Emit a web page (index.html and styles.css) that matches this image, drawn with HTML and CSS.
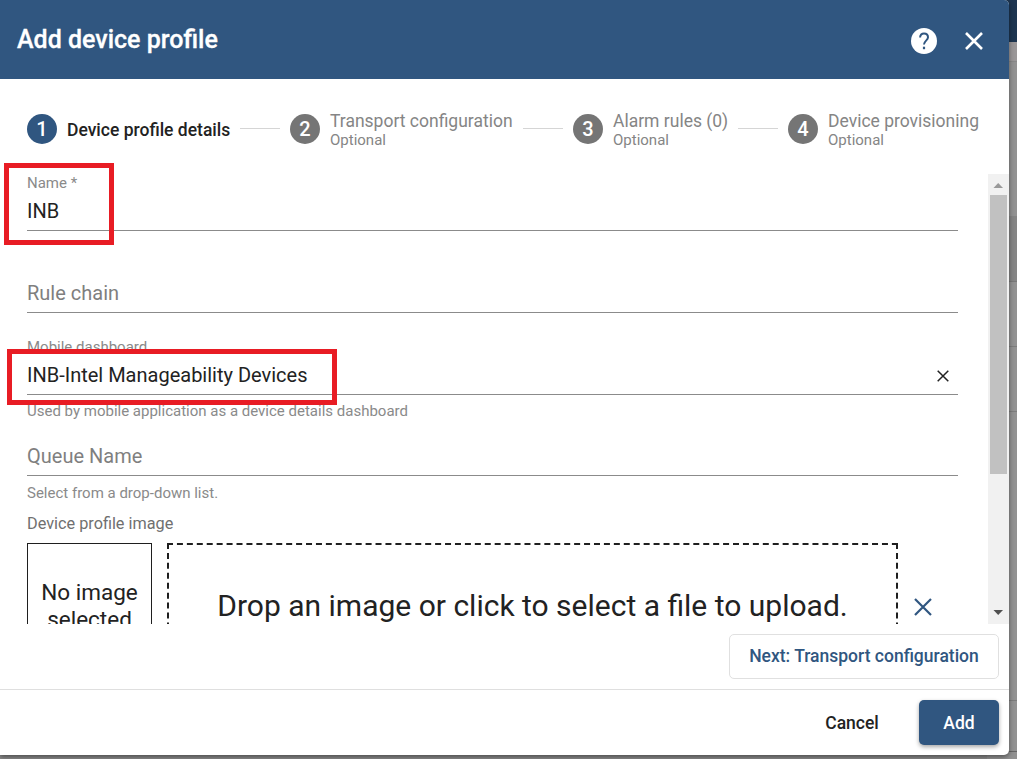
FILE: index.html
```html
<!DOCTYPE html>
<html lang="en">
<head>
<meta charset="utf-8">
<title>Add device profile</title>
<link rel="stylesheet" href="styles.css">
</head>
<body>
<div class="backdrop">
  <div class="page-edge">
    <div class="edge-top"></div>
    <div class="edge-bar"></div>
    <div class="edge-light"></div>
    <div class="edge-head"></div>
    <div class="edge-row"></div>
    <div class="edge-row"></div>
    <div class="edge-rest"></div>
    <div class="edge-foot"></div>
  </div>
  <main class="dialog">
    <header class="toolbar">
      <h1 class="title">Add device profile</h1>
      <svg class="help" viewBox="0 0 26 26"><circle cx="13" cy="13" r="13" fill="#fff"/><path d="M9.1 9.6C9.1 6.9 10.7 5.400 13 5.400s4 1.500 4 3.900c0 3.200-4 3.500-4 7.200" fill="none" stroke="#305680" stroke-width="2"/><rect x="11.900" y="18.700" width="2.200" height="2.500" fill="#305680"/></svg>
      <svg class="close" viewBox="0 0 18 18"><path d="M1 1l16 16M17 1L1 17" stroke="#fff" stroke-width="2.6"/></svg>
    </header>
    <nav class="stepper">
      <div class="circle active">1</div>
      <div class="label l1 current">Device profile details</div>
      <div class="line"></div>
      <div class="circle">2</div>
      <div class="label l2"><span class="step-name">Transport configuration</span><span class="optional">Optional</span></div>
      <div class="line"></div>
      <div class="circle">3</div>
      <div class="label l3"><span class="step-name">Alarm rules (0)</span><span class="optional">Optional</span></div>
      <div class="line"></div>
      <div class="circle">4</div>
      <div class="label l4"><span class="step-name">Device provisioning</span><span class="optional">Optional</span></div>
    </nav>
    <section class="scroll-area">
      <div class="form">
        <div class="field name-field">
          <div class="caption">Name *</div>
          <div class="value">INB</div>
        </div>
        <div class="field rule-field">
          <div class="value placeholder">Rule chain</div>
        </div>
        <div class="field dash-field">
          <div class="caption">Mobile dashboard</div>
          <div class="value row"><span class="dash-text">INB-Intel Manageability Devices</span>
            <svg class="clear" viewBox="0 0 12 12"><path d="M.7.7l10.6 10.6M11.3.7L.7 11.3" stroke="#222" stroke-width="1.5"/></svg></div>
        </div>
        <div class="hint hint-dash">Used by mobile application as a device details dashboard</div>
        <div class="field queue-field">
          <div class="value placeholder">Queue Name</div>
        </div>
        <div class="hint hint-queue">Select from a drop-down list.</div>
        <div class="image-label">Device profile image</div>
        <div class="upload">
          <div class="preview">No image<br>selected</div>
          <div class="drop"><svg class="dash-border" viewBox="0 0 731 110"><path d="M0 1H731" fill="none" stroke="#1f1f1f" stroke-width="2" stroke-dasharray="6 3.930"/><path d="M1 0V110M730 0V110" fill="none" stroke="#1f1f1f" stroke-width="2" stroke-dasharray="6 3.930"/></svg><span class="drop-text">Drop an image or click to select a file to upload.</span></div>
          <svg class="remove" viewBox="0 0 18 18"><path d="M1 1l16 16M17 1L1 17" stroke="#305680" stroke-width="2.2"/></svg>
        </div>
      </div>
      <div class="scrollbar">
        <svg class="arrow" viewBox="0 0 20 21"><path d="M5.5 14L10.2 9l4.8 5z" fill="#999"/></svg>
        <div class="thumb"></div>
        <div class="track"></div>
        <svg class="arrow" viewBox="0 0 20 21"><path d="M5.500 7h9.500L10.200 12z" fill="#505050"/></svg>
      </div>
    </section>
    <div class="next-row"><button class="btn next">Next: Transport configuration</button></div>
    <footer class="actions">
      <button class="btn cancel">Cancel</button>
      <button class="btn add">Add</button>
    </footer>
    <div class="mark mark-name"></div>
    <div class="mark mark-dash"></div>
  </main>
</div>
</body>
</html>
```
FILE: styles.css
```css
* { box-sizing: border-box; }
body { margin: 0; background: #fff; font-family: Roboto, sans-serif; color: #222; overflow: hidden; }
svg { display: block; flex: none; }
.backdrop { position: relative; width: 1017px; height: 759px; background: #8a8a8a; }
.page-edge { position: absolute; right: 0; top: 0; width: 30px; height: 759px; display: flex; flex-direction: column; background: #929292; }
.edge-top { height: 42px; background: #1d3550; }
.edge-bar { height: 20px; background: #9a9798; border-bottom: 1px solid #888; }
.edge-light { height: 154px; background: #929292; }
.edge-head { height: 66px; background: #858585; border-bottom: 1px solid #787878; }
.edge-row { height: 65px; border-bottom: 1px solid #7d7d7d; }
.edge-rest { height: 289px; border-bottom: 1px solid #7c7c7c; }
.edge-foot { height: 51px; border-bottom: 1px solid #666; }
.dialog { position: relative; width: 1009px; height: 755px; background: #fff; border-radius: 0 5px 5px 0; overflow: hidden; box-shadow: 0 2px 5px rgba(0,0,0,.45); }
.toolbar { height: 79px; background: #305680; display: flex; align-items: center; padding: 3px 26px 0 17px; }
.title { margin: -3px auto 0 0; font-size: 25px; line-height: 32px; font-weight: 500; color: #fff; white-space: nowrap; -webkit-text-stroke: .3px #fff; }
.help { width: 26px; height: 26px; margin-right: 28px; }
.close { width: 18px; height: 18px; }
.stepper { height: 95px; display: flex; align-items: center; padding: 4px 0 0 27px; white-space: nowrap; }
.circle { width: 30px; height: 30px; flex: none; border-radius: 50%; background: #757575; color: #fff; font-size: 20px; font-weight: 500; line-height: 31px; text-align: center; }
.circle.active { background: #305680; }
.label { margin-left: 10px; flex: none; display: flex; flex-direction: column; color: #858585; padding-top: 3px; }
.current { color: #222; font-size: 17.5px; font-weight: 500; line-height: 22px; }
.l1 { width: 163px; } .l2 { width: 183px; } .l3 { width: 115px; } .l4 { width: 152px; }
.step-name { font-size: 17.5px; line-height: 20px; }
.optional { font-size: 15px; line-height: 18px; }
.line { width: 40px; height: 1px; background: #d5d5d5; margin: 0 10px; flex: none; }
.scroll-area { height: 450px; display: flex; overflow: hidden; }
.form { width: 988px; padding: 0 30px 0 27px; }
.field { border-bottom: 1px solid #8b8b8b; }
.caption { font-size: 15px; line-height: 18px; color: #8a8a8a; }
.value { font-size: 20px; line-height: 24px; white-space: nowrap; }
.placeholder { color: #7f7f7f; }
.name-field { height: 57px; }
.name-field .value { margin-top: 7px; }
.rule-field { height: 82px; padding-top: 50px; }
.dash-field { height: 82px; padding-top: 25px; }
.dash-field .value { margin-top: 7px; }
.row { display: flex; align-items: center; justify-content: space-between; }
.clear { width: 12px; height: 12px; margin-right: 9px; margin-top: 2px; }
.hint { font-size: 15px; line-height: 18px; color: #8a8a8a; margin-top: 7px; }
.queue-field { height: 56px; padding-top: 24px; }
.hint-queue { margin-top: 8px; }
.image-label { font-size: 16.25px; line-height: 20px; color: #707070; margin-top: 12px; }
.upload { display: flex; margin-top: 9px; }
.preview { width: 125px; height: 125px; flex: none; border: 1px solid #1f1f1f; padding-top: 35px; text-align: center; font-size: 22.5px; line-height: 26.5px; }
.drop { position: relative; width: 731px; height: 125px; margin-left: 15px; flex: none; text-align: center; padding-top: 44px; }
.dash-border { position: absolute; left: 0; top: 0; width: 731px; height: 110px; }
.drop-text { font-size: 30px; line-height: 38px; white-space: nowrap; }
.remove { width: 18px; height: 18px; margin: 55px 0 0 16px; }
.scrollbar { width: 21px; flex: none; background: #f1f1f1; display: flex; flex-direction: column; }
.arrow { width: 20px; height: 21px; }
.thumb { width: 17px; height: 279px; margin-left: 2px; background: #c1c1c1; }
.track { flex: 1; }
.next-row { height: 66px; display: flex; justify-content: flex-end; padding: 10px 10px 0; border-bottom: 1px solid #dfdfdf; }
.btn { font: 500 17.5px/22px Roboto, sans-serif; border: 0; border-radius: 5px; background: #fff; color: #222; padding: 0; height: 45px; white-space: nowrap; }
.next { width: 270px; border: 1px solid #e0e0e0; color: #305680; padding-bottom: 2px; }
.actions { display: flex; justify-content: flex-end; padding: 10px 10px 0; }
.cancel { width: 94px; margin-right: 20px; }
.add { width: 80px; background: #305680; color: #fff; box-shadow: 0 2px 4px rgba(0,0,0,.35); }
.mark { position: absolute; border: 5px solid #e81c24; }
.mark-name { left: 4px; top: 163px; width: 110px; height: 82px; }
.mark-dash { left: 7px; top: 349px; width: 330px; height: 56px; }
```
